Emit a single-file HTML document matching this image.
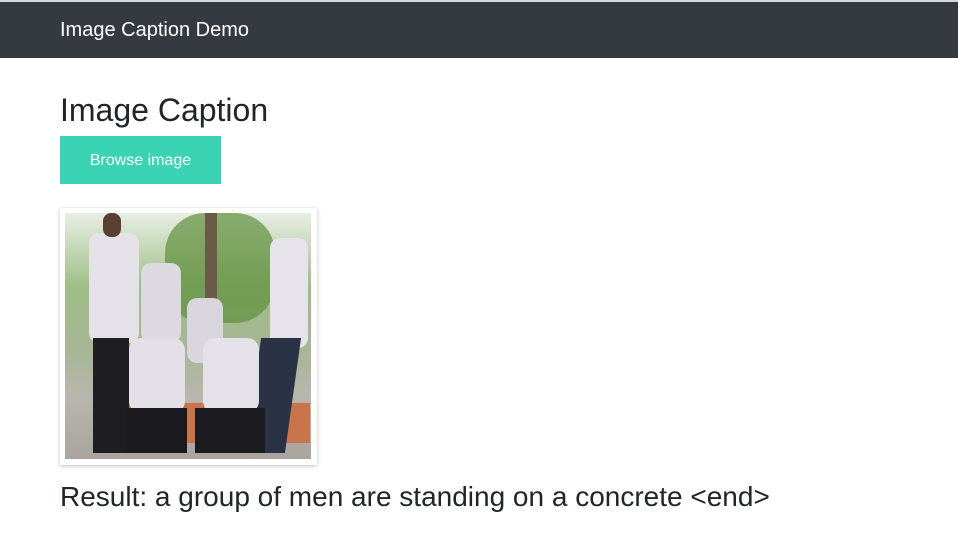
<!DOCTYPE html>
<html><head><meta charset="utf-8"><style>
*{margin:0;padding:0;box-sizing:border-box}
body{width:958px;height:540px;overflow:hidden;background:#fff;font-family:"Liberation Sans",sans-serif;color:#212529;position:relative}
.top{position:absolute;left:0;top:0;width:958px;height:2px;background:#d6d6d6}
.nav{position:absolute;left:0;top:2px;width:958px;height:56px;background:#343a40}
.nav span{position:absolute;left:60px;top:17px;font-size:20px;color:#fff}
h1{position:absolute;left:60px;top:91px;font-size:32px;font-weight:400;line-height:38px}
.btn{position:absolute;left:60px;top:136px;width:161px;height:48px;background:#3ad4b4;color:#fff;font-size:16px;text-align:center;line-height:50px}
.frame{position:absolute;left:60px;top:208px;width:257px;height:257px;background:#fff;box-shadow:0 1px 4px rgba(0,0,0,.25)}
.img{position:absolute;left:5px;top:5px;width:246px;height:246px;overflow:hidden;background:linear-gradient(#e8eee4 0%,#9dbf86 30%,#a7b694 55%,#b8b6ae 75%,#a9a59e 100%)}
.img div{position:absolute}
.res{position:absolute;left:60px;top:481px;font-size:28px;line-height:32px}
</style></head><body>
<div class="top"></div>
<div class="nav"><span>Image Caption Demo</span></div>
<h1>Image Caption</h1>
<div class="btn">Browse image</div>
<div class="frame"><div class="img">
<div style="left:100px;top:0;width:110px;height:110px;background:#5f8f3c;border-radius:40px;opacity:.7"></div>
<div style="left:140px;top:0;width:12px;height:180px;background:#6b5a45"></div>
<div style="left:35px;top:190px;width:210px;height:40px;background:#c9744a"></div>
<div style="left:24px;top:20px;width:50px;height:110px;background:#e4e2e8;border-radius:10px"></div>
<div style="left:28px;top:125px;width:36px;height:115px;background:#1d1d22"></div>
<div style="left:38px;top:0;width:18px;height:24px;background:#5a3f35;border-radius:8px"></div>
<div style="left:76px;top:50px;width:40px;height:80px;background:#dcdae0;border-radius:10px"></div>
<div style="left:122px;top:85px;width:36px;height:65px;background:#d8d6dc;border-radius:10px"></div>
<div style="left:205px;top:25px;width:38px;height:110px;background:#e6e4ea;border-radius:10px"></div>
<div style="left:188px;top:125px;width:40px;height:115px;background:#2a3346;transform:skewX(-8deg)"></div>
<div style="left:64px;top:125px;width:56px;height:75px;background:#e2e0e6;border-radius:12px"></div>
<div style="left:62px;top:195px;width:60px;height:45px;background:#1a1a1e"></div>
<div style="left:138px;top:125px;width:56px;height:75px;background:#e4e2e8;border-radius:12px"></div>
<div style="left:130px;top:195px;width:70px;height:45px;background:#1c1c20"></div>
</div></div>
<div class="res">Result: a group of men are standing on a concrete &lt;end&gt;</div>
</body></html>
